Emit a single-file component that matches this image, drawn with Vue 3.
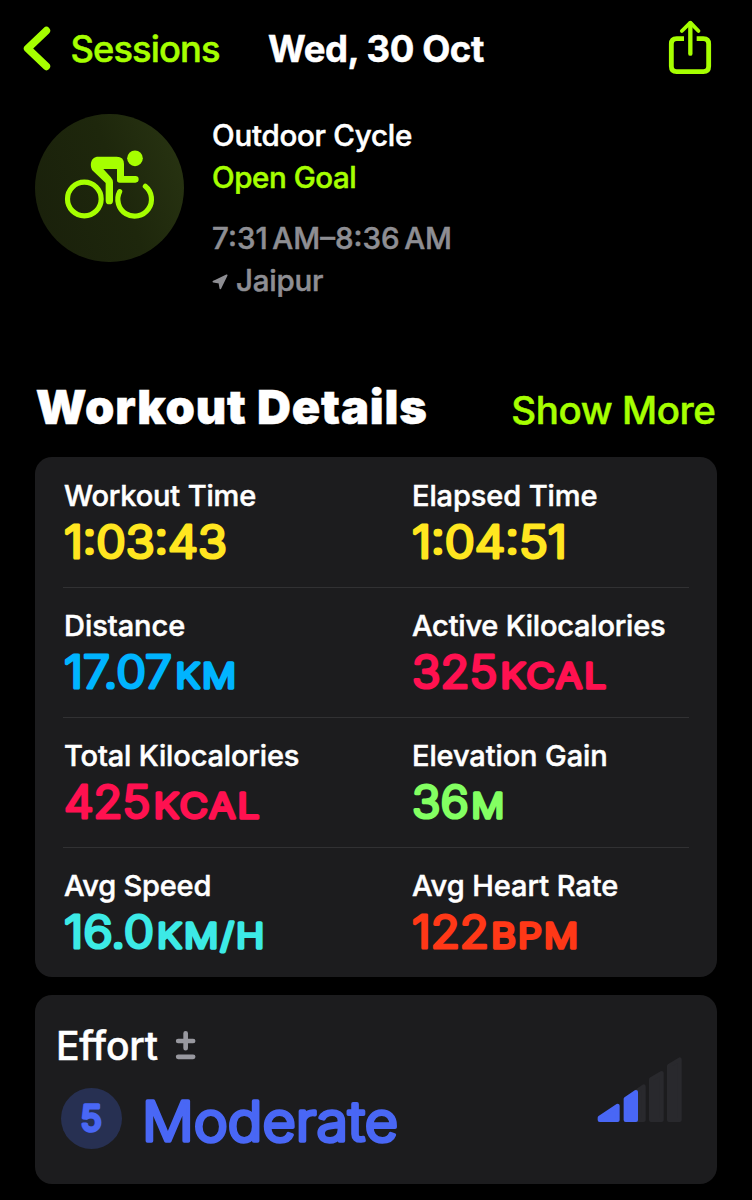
<template>
  <div class="screen">
    <header class="nav">
      <a class="back">
        <svg class="chevron" viewBox="69 78 84 135">
          <path d="M139 92L83 145.500L139 199" />
        </svg>
        <span>Sessions</span>
      </a>
      <h1 class="date">Wed, 30 Oct</h1>
      <svg class="share" viewBox="876 58 132 165">
        <path class="box" d="M924 114H902Q886 114 886 130V197Q886 213 902 213H982Q998 213 998 197V130Q998 114 982 114H962" />
        <path class="shaft" d="M943 68V159" />
        <path class="head" d="M917.500 91L943 66L967.500 91" />
      </svg>
    </header>

    <section class="summary">
      <div class="badge">
        <svg class="bike" viewBox="135 150 270 204">
          <circle class="wheel" cx="193" cy="297" r="50.500" />
          <path class="wheel" d="M299 275A50.500 50.500 0 1 0 376 259" />
          <circle cx="345" cy="175" r="23.500" />
          <path d="M235 170H290Q312 170 312 192V228H346A10 10 0 0 1 346 248H299Q291 248 291 240V207H250L272 231Q279 239 279 247V302A11 11 0 0 1 257 302V249L220 214C208 202 209 170 235 170Z" />
        </svg>
      </div>
      <div class="info">
        <p class="name">Outdoor Cycle</p>
        <p class="goal">Open Goal</p>
        <p class="time">7:31 AM–8:36 AM</p>
        <p class="place">
          <svg class="arrow" viewBox="36 523 48 48">
            <path d="M80 527L40 546L58 549L61 566Z" />
          </svg>
          <span>Jaipur</span>
        </p>
      </div>
    </section>

    <div class="heading">
      <h2>Workout Details</h2>
      <a class="more">Show More</a>
    </div>

    <section class="card details">
      <div v-for="(row, i) in rows" :key="i" class="row">
        <div v-for="m in row" :key="m.label" class="metric">
          <span class="label" :style="{ letterSpacing: m.track + 'px' }">{{ m.label }}</span>
          <svg class="value" :class="m.tone">
            <text class="number" x="0" y="44" :textLength="m.width" lengthAdjust="spacingAndGlyphs">{{ m.value }}</text>
            <text v-if="m.unit" class="unit" :x="m.unitX" y="44" :textLength="m.unitWidth" lengthAdjust="spacingAndGlyphs">{{ m.unit }}</text>
          </svg>
        </div>
      </div>
    </section>

    <section class="card effort">
      <div>
        <div class="effort-head">
          <span>Effort</span>
          <svg class="plusminus" viewBox="467 150 64 90">
            <path d="M476.500 183H521.500M499 160V204.500M476.500 230.500H521.500" />
          </svg>
        </div>
        <div class="level">
          <svg class="score" viewBox="0 0 61 61">
            <circle cx="30.500" cy="30.500" r="30.500" />
            <text x="19.500" y="43">5</text>
          </svg>
          <svg class="level-name">
            <text x="0" y="52.500" textLength="256" lengthAdjust="spacingAndGlyphs">Moderate</text>
          </svg>
        </div>
      </div>
      <svg class="bars" viewBox="112 228 258 200">
        <path class="off" d="M198 420H252V319L198 357Z" />
        <path class="off" d="M274 420H306V279L274 298Z" />
        <path class="off" d="M328 420H360V238L328 258Z" />
        <path class="on" d="M120 420H174V377L120 413Z" />
        <path class="on" d="M198 420H229V336L198 357Z" />
      </svg>
    </section>
  </div>
</template>

<script setup>
import { ref } from 'vue';

const rows = ref([
  [
    { label: 'Workout Time', track: -0.16, value: '1:03:43', width: 163, tone: 'yellow' },
    { label: 'Elapsed Time', track: -0.1, value: '1:04:51', width: 155, tone: 'yellow' },
  ],
  [
    { label: 'Distance', track: -0.05, value: '17.07', width: 107.9, unit: 'KM', unitX: 111.5, unitWidth: 62.8, tone: 'blue' },
    { label: 'Active Kilocalories', track: -0.21, value: '325', width: 85.3, unit: 'KCAL', unitX: 88.5, unitWidth: 107.8, tone: 'pink' },
  ],
  [
    { label: 'Total Kilocalories', track: -0.15, value: '425', width: 86.3, unit: 'KCAL', unitX: 89.8, unitWidth: 107.8, tone: 'pink' },
    { label: 'Elevation Gain', track: -0.1, value: '36', width: 56.8, unit: 'M', unitX: 59.5, unitWidth: 34.8, tone: 'green' },
  ],
  [
    { label: 'Avg Speed', track: -0.22, value: '16.0', width: 90.1, unit: 'KM/H', unitX: 93, unitWidth: 109.5, tone: 'cyan' },
    { label: 'Avg Heart Rate', track: -0.04, value: '122', width: 77, unit: 'BPM', unitX: 79.2, unitWidth: 89, tone: 'red' },
  ],
]);
</script>

<style>
body {
  background: #000;
}
</style>

<style scoped>
.screen {
  box-sizing: border-box;
  height: 1200px;
  overflow: hidden;
  background: #000;
  color: #fff;
  font-family: Inter, "Liberation Sans", sans-serif;
  font-weight: 500;
  -webkit-text-stroke: 0.5px;
}
h1,
h2,
p {
  margin: 0;
}
svg {
  display: block;
  flex: none;
  overflow: visible;
  -webkit-text-stroke: 0;
}
.nav {
  display: flex;
  align-items: center;
  height: 96px;
  padding: 0 40px 0 23px;
  box-sizing: border-box;
}
.back {
  display: flex;
  align-items: center;
  width: 245px;
  color: #a6ff00;
  font-size: 36.3px;
  letter-spacing: -0.9px;
}
.back span {
  padding-top: 1px;
}
.chevron {
  width: 28px;
  height: 45px;
  margin-right: 19.500px;
  fill: none;
  stroke: #a6ff00;
  stroke-width: 23;
  stroke-linecap: round;
  stroke-linejoin: round;
}
.date {
  flex: 1;
  font-size: 36.5px;
  font-weight: 700;
  letter-spacing: -0.4px;
  padding-top: 1px;
}
.share {
  width: 44px;
  height: 55px;
  margin-top: -2px;
  fill: none;
  stroke: #a6ff00;
  stroke-linejoin: round;
}
.share .box {
  stroke-width: 14.500;
}
.share .shaft {
  stroke-width: 13;
  stroke-linecap: round;
}
.share .head {
  stroke-width: 11.500;
  stroke-linecap: round;
}
.summary {
  display: flex;
  gap: 28.500px;
  padding: 17.600px 35px 0;
  height: 268.400px;
}
.badge {
  display: flex;
  align-items: center;
  justify-content: center;
  width: 148.600px;
  height: 148.600px;
  border-radius: 50%;
  background: linear-gradient(70deg, #1a210b 10%, #1e270c 55%, #293512 100%);
}
.bike {
  width: 90px;
  height: 68px;
  margin: -8px 0 0 1px;
  fill: #a6ff00;
}
.bike .wheel {
  fill: none;
  stroke: #a6ff00;
  stroke-width: 15.500;
  stroke-linecap: round;
}
.info {
  font-size: 29.5px;
  line-height: 42.600px;
}
.name {
  letter-spacing: -0.25px;
}
.goal {
  color: #a6ff00;
  letter-spacing: -0.45px;
}
.time {
  margin-top: 18px;
  color: #8e8e93;
  word-spacing: -3.2px;
}
.place {
  display: flex;
  align-items: center;
  gap: 8px;
  color: #8e8e93;
  letter-spacing: -0.23px;
}
.arrow {
  width: 16px;
  height: 16px;
  margin-top: 3px;
  fill: #8e8e93;
  stroke: #8e8e93;
  stroke-width: 5;
  stroke-linejoin: round;
}
.heading {
  display: flex;
  align-items: baseline;
  justify-content: space-between;
  height: 75px;
  padding: 0 36.500px 0 35.700px;
}
.heading h2 {
  font-size: 47px;
  font-weight: 900;
  line-height: 50px;
  letter-spacing: 0.84px;
}
.more {
  color: #a6ff00;
  font-size: 38.5px;
  letter-spacing: -0.42px;
}
.card {
  box-sizing: border-box;
  width: 682px;
  margin-left: 35px;
  border-radius: 17px;
  background: #1c1c1e;
}
.details {
  height: 520px;
  padding: 0 28px;
}
.row {
  display: flex;
  box-sizing: border-box;
  height: 130px;
  padding: 20px 0 0 1px;
}
.row + .row {
  padding-top: 19px;
  border-top: 1px solid #313133;
}
.metric {
  width: 348px;
  flex: none;
}
.label {
  display: block;
  font-size: 29px;
  line-height: 37px;
  white-space: nowrap;
}
/* round joins on the outline soften the letter ends */
.value {
  width: 270px;
  height: 52px;
  fill: currentColor;
  stroke: currentColor;
  stroke-width: 3.200;
  stroke-linejoin: round;
}
.number {
  font-size: 44.5px;
  font-weight: 300;
}
.unit {
  font-size: 34px;
  font-weight: 300;
  letter-spacing: 2px;
  stroke-width: 3.600;
}
.yellow {
  color: #ffe620;
}
.blue {
  color: #00b4ff;
}
.pink {
  color: #ff1150;
}
.green {
  color: #83ff62;
}
.cyan {
  color: #3ceae6;
}
.red {
  color: #ff3817;
}
.effort {
  display: flex;
  justify-content: space-between;
  height: 189px;
  margin-top: 18px;
  padding: 25px 34px 0 20px;
}
.effort-head {
  display: flex;
  align-items: center;
  gap: 17px;
  height: 51px;
  padding-left: 1px;
  font-size: 39px;
  letter-spacing: -0.2px;
}
.plusminus {
  width: 21.300px;
  height: 30px;
  fill: none;
  stroke: #98989f;
  stroke-width: 14;
  stroke-linecap: round;
}
.level {
  display: flex;
  gap: 20.200px;
  padding: 17.500px 0 0 6px;
}
.score {
  width: 61px;
  height: 61px;
}
.score circle {
  fill: #273052;
}
.score text {
  font-size: 35px;
  font-weight: 400;
  fill: #4967f5;
  stroke: #4967f5;
  stroke-width: 3.400;
  stroke-linejoin: round;
}
.level-name {
  width: 260px;
  height: 61px;
  font-size: 54.5px;
  font-weight: 300;
  fill: #4967f5;
  stroke: #4967f5;
  stroke-width: 3.600;
  stroke-linejoin: round;
}
.bars {
  width: 86px;
  height: 66.700px;
  margin-top: 36px;
  stroke-width: 12;
  stroke-linejoin: round;
}
.bars .off {
  fill: #29292d;
  stroke: #29292d;
}
.bars .on {
  fill: #4967f5;
  stroke: #4967f5;
}
</style>
